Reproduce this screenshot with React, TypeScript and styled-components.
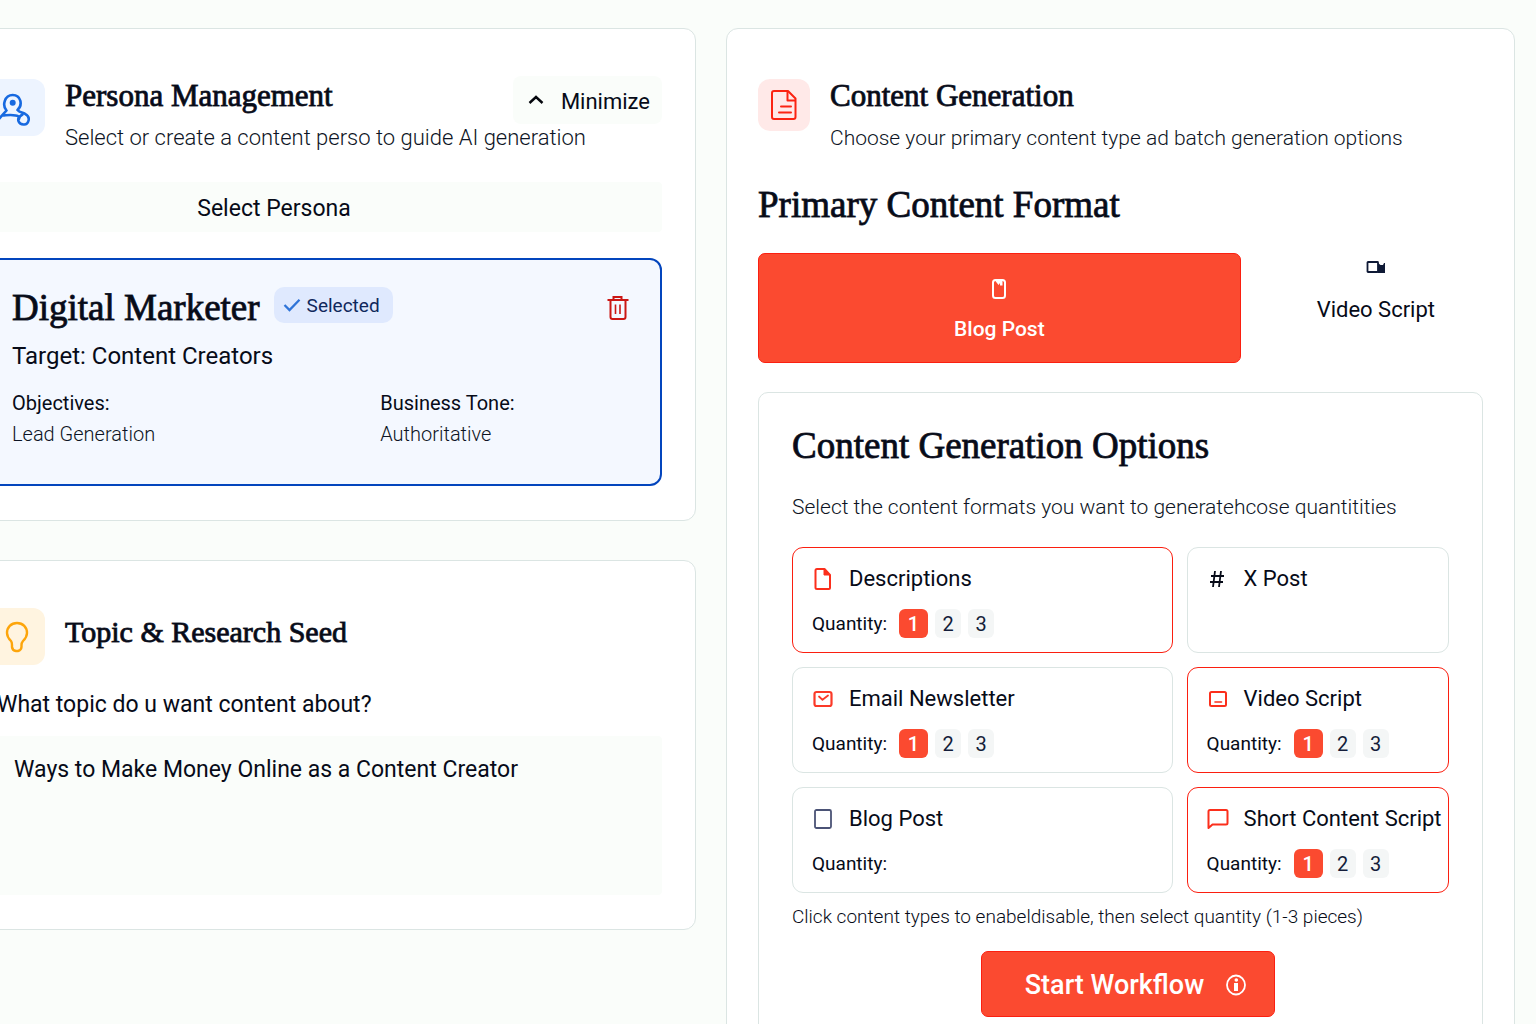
import React, { useState } from "react";
import styled, { createGlobalStyle, css } from "styled-components";

const sans = `Roboto, "Liberation Sans", Arial, sans-serif`;
const serif = `"Liberation Serif", "Times New Roman", serif`;

const ink = "#070b18";
const body = "#0d1424";
const line = "#dbe5e3";
const red = "#fb4a30";
const redLine = "#fb1f10";
const wash = "#fafdfa";

const GlobalStyle = createGlobalStyle`
  *, *::before, *::after { box-sizing: border-box; }
  body { margin: 0; background: ${wash}; color: ${ink}; font-family: ${sans}; }
  h1, h2, h3, p, dl, dd { margin: 0; }
  button, textarea { font: inherit; color: inherit; border: 0; margin: 0; padding: 0; background: none; }
  button { cursor: pointer; }
  svg { display: block; flex: none; }
`;

const Page = styled.main`
  height: 100vh;
  overflow: hidden;
  padding: 28px 21px 0 0;
`;

const Columns = styled.div`
  display: grid;
  grid-template-columns: 742fr 789fr;
  gap: 30px;
  align-items: start;
  margin-left: -46px;
`;

const Stack = styled.div`
  display: flex;
  flex-direction: column;
  gap: 39px;
`;

const Panel = styled.section<{ $inset: number }>`
  min-width: 0;
  padding: 47px ${(p) => p.$inset}px 34px;
  border: 1px solid ${line};
  border-radius: 12px;
  background: #fff;
`;

const Header = styled.header`
  display: grid;
  grid-template-columns: auto 1fr auto;
  grid-template-rows: minmax(48px, auto) auto;
  column-gap: 20px;
`;

const Tile = styled.span<{ $size: number; $bg: string; $drop: number }>`
  grid-row: 1 / span 2;
  display: grid;
  place-items: center;
  width: ${(p) => p.$size}px;
  height: ${(p) => p.$size}px;
  margin-top: ${(p) => p.$drop}px;
  border-radius: 12px;
  background: ${(p) => p.$bg};
`;

/* The face has only regular and bold; a translucent outline gives the weight between them. */
const heading = css`
  -webkit-text-stroke: 1px rgba(7, 11, 24, 0.85);
  white-space: nowrap;
`;

const PanelTitle = styled.h2<{ $middle?: boolean }>`
  align-self: ${(p) => (p.$middle ? "center" : "start")};
  font: 400 ${(p) => (p.$middle ? 30 : 31)}px/40px ${serif};
  ${heading}
`;

const Lead = styled.p<{ $small?: boolean }>`
  grid-column: 2 / span 2;
  font-size: ${(p) => (p.$small ? 21 : 22)}px;
  font-weight: 300;
  line-height: 28px;
  color: ${body};
  white-space: nowrap;
`;

const GhostButton = styled.button`
  display: flex;
  align-items: center;
  gap: 17px;
  height: 48px;
  padding: 3px 12px 0 15px;
  border-radius: 8px;
  background: ${wash};
  font-size: 22px;
`;

const SelectButton = styled.button`
  display: block;
  width: 100%;
  height: 50px;
  margin: 30px 0 26px;
  padding: 3px 102px 0 0;
  border-radius: 4px;
  background: ${wash};
  font-size: 23px;
`;

const PersonaCard = styled.article`
  padding: 26px 29px 34px 22px;
  border: 2px solid #0345bd;
  border-radius: 12px;
  background: #f4f8ff;
`;

const PersonaTop = styled.div`
  display: flex;
  align-items: center;
  gap: 14px;
`;

const SectionTitle = styled.h3`
  font: 400 37px/44px ${serif};
  ${heading}
`;

const Badge = styled.span`
  display: flex;
  align-items: center;
  gap: 6px;
  height: 36px;
  padding: 0 13px 0 9px;
  margin-bottom: 6px;
  border-radius: 10px;
  background: #dfe9fe;
  color: #10285c;
  font-size: 19px;
`;

const IconButton = styled.button`
  margin-left: auto;
  padding: 2px;
`;

const Target = styled.p`
  margin-top: 11px;
  font-size: 24px;
  line-height: 30px;
`;

const Facts = styled.dl`
  display: grid;
  grid-template-columns: 370fr 252fr;
  margin-top: 17px;
  font-size: 20px;
  line-height: 31px;
`;

const FactName = styled.dt``;

const FactValue = styled.dd`
  font-weight: 300;
  color: ${body};
`;

const FieldLabel = styled.label`
  display: block;
  margin: 25px 0 16px;
  padding-left: 9px;
  font-size: 23px;
  line-height: 30px;
`;

const TopicBox = styled.textarea`
  display: block;
  width: 100%;
  height: 159px;
  padding: 19px 26px;
  border-radius: 4px;
  background: ${wash};
  font-size: 23px;
  line-height: 30px;
  resize: none;
  outline: none;
`;

const FormatTitle = styled(SectionTitle)`
  margin: 31px 0 26px;
`;

const Formats = styled.div`
  display: grid;
  grid-template-columns: 482fr 214fr;
  gap: 28px;
  align-items: start;
`;

const FormatButton = styled.button<{ $active: boolean }>`
  display: flex;
  flex-direction: column;
  align-items: center;
  height: 110px;
  line-height: 28px;
  ${(p) =>
    p.$active
      ? css`
          gap: 15px;
          padding-top: 24px;
          border: 1px solid ${redLine};
          border-radius: 7px;
          background: ${red};
          color: #fff;
          font-size: 21px;
          font-weight: 500;
        `
      : css`
          gap: 22px;
          padding-top: 7px;
          font-size: 22px;
        `}
`;

const Options = styled.section`
  margin-top: 29px;
  padding: 31px 33px 60px;
  border: 1px solid ${line};
  border-radius: 10px;
`;

const OptionsLead = styled(Lead)`
  margin: 25px 0 26px;
`;

const OptionGrid = styled.div`
  display: grid;
  grid-template-columns: 380fr 262fr;
  grid-auto-rows: 106px;
  gap: 14px;
`;

const OptionCard = styled.div<{ $active: boolean }>`
  display: flex;
  flex-direction: column;
  gap: 15px;
  min-width: 0;
  padding: 16px 0 0 19px;
  border: 1px solid ${(p) => (p.$active ? redLine : line)};
  border-radius: 11px;
`;

const OptionToggle = styled.button`
  display: flex;
  align-items: center;
  gap: 15px;
  font-size: 22px;
  line-height: 30px;
  white-space: nowrap;
`;

const OptionIcon = styled.span`
  display: grid;
  place-items: center;
  width: 22px;
  height: 24px;
`;

const Quantity = styled.div`
  display: flex;
  align-items: center;
  gap: 7px;
  height: 29px;
  font-size: 19px;
`;

const QuantityLabel = styled.span`
  margin-right: 5px;
`;

const Chip = styled.button<{ $on: boolean }>`
  width: ${(p) => (p.$on ? 29 : 26)}px;
  height: 29px;
  border-radius: 6px;
  background: ${(p) => (p.$on ? red : "#f4f6f6")};
  color: ${(p) => (p.$on ? "#fff" : "#141d3a")};
  font-size: 20px;
  font-weight: ${(p) => (p.$on ? 500 : 400)};
`;

const Hint = styled.p`
  margin-top: 10px;
  font-size: 19px;
  font-weight: 300;
  line-height: 28px;
  white-space: nowrap;
`;

const Actions = styled.div`
  display: flex;
  justify-content: center;
  margin-top: 20px;
  padding-left: 15px;
`;

const StartButton = styled.button`
  display: flex;
  align-items: center;
  gap: 22px;
  height: 66px;
  padding: 2px 28px 0 43px;
  border: 1px solid ${redLine};
  border-radius: 7px;
  background: ${red};
  color: #fff;
  font-size: 27px;
  font-weight: 500;
`;

const PersonaIcon = () => (
  <svg width="40" height="40" viewBox="0 0 40 40" fill="none" stroke="#1769e0" strokeWidth="2.6" strokeLinecap="round" strokeLinejoin="round">
    <path d="M1 32 L9.5 22.5 C5 17.5 7.5 7 15.7 7 C24 7 26 17 20.5 22 C22 24 25 24.5 28 25.8 C34.5 29 31.5 37 26.5 36.5 C21 36.3 20.5 31.5 22 28.8 C18 26 12.5 27 6 27.5" />
    <path d="M25.5 26.5 C23.5 27.5 22 28.8 22 31" />
    <circle cx="15.7" cy="14.8" r="3" fill="#1769e0" stroke="none" />
  </svg>
);

const BulbIcon = () => (
  <svg width="24" height="32" viewBox="0 0 24 32" fill="none" stroke="#fda50b" strokeWidth="2.4" strokeLinejoin="round">
    <path d="M12 2 C6 2 2 6.5 2 12 C2 15.5 4 18 6 20 C7 21.2 7 22.5 7 24 V26 A4.5 4.5 0 0 0 11 30 H13 A4.5 4.5 0 0 0 16.5 26 V24 C16.5 22.5 17 21.2 18 20 C20 18 22 15.5 22 12 C22 6.5 18 2 12 2 Z" />
  </svg>
);

const DocumentIcon = () => (
  <svg width="26" height="32" viewBox="0 0 26 32" fill="none" stroke="#fb2312" strokeWidth="2" strokeLinejoin="round" strokeLinecap="round">
    <path d="M3 2 H17 L24.5 9.5 V28 A2 2 0 0 1 22.5 30 H3 A2 2 0 0 1 1 28 V4 A2 2 0 0 1 3 2 Z" />
    <path d="M16.5 2.5 V11.5 H24" />
    <path d="M10 17.5 H20 M8 23.5 H20" />
  </svg>
);

const ChevronUpIcon = () => (
  <svg width="16" height="16" viewBox="0 0 16 16" fill="none" stroke="#05070d" strokeWidth="2.4">
    <path d="M1.5 9 L8 3 L14.5 9" />
  </svg>
);

const CheckIcon = () => (
  <svg width="18" height="14" viewBox="0 0 18 14" fill="none" stroke="#2f74d8" strokeWidth="2.3">
    <path d="M1.5 7 L6.5 12 L16.5 1.8" />
  </svg>
);

const TrashIcon = () => (
  <svg width="22" height="26" viewBox="0 0 22 26" fill="none" stroke="#cb1714" strokeWidth="2">
    <path d="M0.5 5 H21.5 M6.5 5 V2 H14.5 V5 M3.5 5 V22 A2 2 0 0 0 5.5 24 H16.5 A2 2 0 0 0 18.5 22 V5" />
    <path d="M8.5 9.5 V19 M13 9.5 V19" strokeWidth="1.6" />
  </svg>
);

const ClipIcon = () => (
  <svg width="14" height="22" viewBox="0 0 14 22" fill="none" stroke="#fff" strokeWidth="2">
    <rect x="1" y="2" width="12" height="18" rx="2.5" />
    <path d="M3 2.5 L6.5 7 L8 5 V7.5 H10.500 V3 Z" fill="#fff" stroke="none" />
  </svg>
);

const CameraIcon = () => (
  <svg width="20" height="14" viewBox="0 0 20 14">
    <rect x="1.5" y="2" width="10.5" height="10" rx="0.5" fill="none" stroke="#0f1a36" strokeWidth="1.8" />
    <path d="M12 3 L14.5 5 H17 L18 3 H19 V13 H12 Z" fill="#0f1a36" />
  </svg>
);

const FileIcon = () => (
  <svg width="18" height="24" viewBox="0 0 18 24" fill="none" stroke="#fb2f1c" strokeWidth="2" strokeLinejoin="round">
    <path d="M3 2 H10.5 L16 8 V21 A1 1 0 0 1 15 22 H3 A1.5 1.5 0 0 1 1.5 20.5 V3.5 A1.5 1.5 0 0 1 3 2 Z" />
    <path d="M10 2 V8 H16 Z" fill="#fb2f1c" strokeWidth="1" />
  </svg>
);

const MailIcon = () => (
  <svg width="20" height="18" viewBox="0 0 20 18" fill="none" stroke="#fb3a28" strokeWidth="2.2" strokeLinejoin="round">
    <rect x="1.5" y="2" width="17" height="14" rx="2" />
    <path d="M6 6.5 L9.5 9.8 L15 5.5" strokeWidth="1.8" strokeLinecap="round" />
  </svg>
);

const ScreenIcon = () => (
  <svg width="18" height="16" viewBox="0 0 18 16" fill="none" stroke="#fb2f1c" strokeWidth="2">
    <rect x="1" y="1" width="16" height="14" rx="1.5" />
    <path d="M6 11 H12.5" strokeLinecap="round" strokeWidth="1.6" />
  </svg>
);

const PageIcon = () => (
  <svg width="18" height="20" viewBox="0 0 18 20" fill="none" stroke="#4b5376" strokeWidth="1.8">
    <rect x="1" y="1" width="16" height="18" rx="1.5" />
  </svg>
);

const ChatIcon = () => (
  <svg width="22" height="22" viewBox="0 0 22 22" fill="none" stroke="#fb2f1c" strokeWidth="2" strokeLinejoin="round">
    <path d="M1.5 20 V3.5 A1.5 1.5 0 0 1 3 2 H19 A1.5 1.5 0 0 1 20.5 3.5 V15 A1.5 1.5 0 0 1 19 16.5 H5.5 Z" />
  </svg>
);

const HashIcon = () => (
  <svg width="18" height="18" viewBox="0 0 18 18" fill="none" stroke="#070b18" strokeWidth="1.8">
    <path d="M6 1 L4 17 M12 1 L10 17 M2 6 H15 M1 12 H14" />
  </svg>
);

const InfoIcon = () => (
  <svg width="20" height="22" viewBox="0 0 20 22" fill="none" stroke="#fff">
    <ellipse cx="10" cy="11" rx="9" ry="9.5" strokeWidth="1.8" />
    <path d="M8 9 H12 V17 H8 Z" fill="#fff" stroke="none" />
    <circle cx="10.3" cy="6" r="1.8" fill="#fff" stroke="none" />
  </svg>
);

type Option = { id: string; name: string; icon: React.ReactNode; quantities?: number[] };

const options: Option[] = [
  { id: "descriptions", name: "Descriptions", icon: <FileIcon />, quantities: [1, 2, 3] },
  { id: "x", name: "X Post", icon: <HashIcon /> },
  { id: "email", name: "Email Newsletter", icon: <MailIcon />, quantities: [1, 2, 3] },
  { id: "video", name: "Video Script", icon: <ScreenIcon />, quantities: [1, 2, 3] },
  { id: "blog", name: "Blog Post", icon: <PageIcon />, quantities: [] },
  { id: "short", name: "Short Content Script", icon: <ChatIcon />, quantities: [1, 2, 3] },
];

const formats = [
  { id: "blog", name: "Blog Post", icon: <ClipIcon /> },
  { id: "video", name: "Video Script", icon: <CameraIcon /> },
];

export default function App() {
  const [format, setFormat] = useState("blog");
  const [enabled, setEnabled] = useState<string[]>(["descriptions", "video", "short"]);
  const [counts, setCounts] = useState<Record<string, number>>({});
  const [topic, setTopic] = useState("Ways to Make Money Online as a Content Creator");

  const toggle = (id: string) =>
    setEnabled((list) => (list.includes(id) ? list.filter((x) => x !== id) : [...list, id]));

  return (
    <>
      <GlobalStyle />
      <Page>
        <Columns>
          <Stack>
            <Panel $inset={33}>
              <Header>
                <Tile $size={57} $bg="#edf4ff" $drop={3}><PersonaIcon /></Tile>
                <PanelTitle>Persona Management</PanelTitle>
                <GhostButton type="button"><ChevronUpIcon />Minimize</GhostButton>
                <Lead>Select or create a content perso to guide AI generation</Lead>
              </Header>
              <SelectButton type="button">Select Persona</SelectButton>
              <PersonaCard>
                <PersonaTop>
                  <SectionTitle>Digital Marketer</SectionTitle>
                  <Badge><CheckIcon />Selected</Badge>
                  <IconButton type="button" aria-label="Delete persona"><TrashIcon /></IconButton>
                </PersonaTop>
                <Target>Target: Content Creators</Target>
                <Facts>
                  <div>
                    <FactName>Objectives:</FactName>
                    <FactValue>Lead Generation</FactValue>
                  </div>
                  <div>
                    <FactName>Business Tone:</FactName>
                    <FactValue>Authoritative</FactValue>
                  </div>
                </Facts>
              </PersonaCard>
            </Panel>

            <Panel $inset={33}>
              <Header>
                <Tile $size={57} $bg="#fff4e0" $drop={0}><BulbIcon /></Tile>
                <PanelTitle $middle>Topic &amp; Research Seed</PanelTitle>
              </Header>
              <FieldLabel htmlFor="topic">What topic do u want content about?</FieldLabel>
              <TopicBox id="topic" value={topic} onChange={(e) => setTopic(e.target.value)} />
            </Panel>
          </Stack>

          <Panel $inset={31}>
            <Header>
              <Tile $size={52} $bg="#ffe9e8" $drop={3}><DocumentIcon /></Tile>
              <PanelTitle>Content Generation</PanelTitle>
              <Lead $small>Choose your primary content type ad batch generation options</Lead>
            </Header>
            <FormatTitle>Primary Content Format</FormatTitle>
            <Formats>
              {formats.map((f) => (
                <FormatButton key={f.id} type="button" $active={format === f.id} aria-pressed={format === f.id} onClick={() => setFormat(f.id)}>
                  {f.icon}
                  {f.name}
                </FormatButton>
              ))}
            </Formats>

            <Options>
              <SectionTitle>Content Generation Options</SectionTitle>
              <OptionsLead $small>Select the content formats you want to generatehcose quantitities</OptionsLead>
              <OptionGrid>
                {options.map((o) => (
                  <OptionCard key={o.id} $active={enabled.includes(o.id)}>
                    <OptionToggle type="button" aria-pressed={enabled.includes(o.id)} onClick={() => toggle(o.id)}>
                      <OptionIcon>{o.icon}</OptionIcon>
                      {o.name}
                    </OptionToggle>
                    {o.quantities && (
                      <Quantity role="group" aria-label={`${o.name} quantity`}>
                        <QuantityLabel>Quantity:</QuantityLabel>
                        {o.quantities.map((n) => (
                          <Chip key={n} type="button" $on={(counts[o.id] ?? 1) === n} onClick={() => setCounts({ ...counts, [o.id]: n })}>
                            {n}
                          </Chip>
                        ))}
                      </Quantity>
                    )}
                  </OptionCard>
                ))}
              </OptionGrid>
              <Hint>Click content types to enabeldisable, then select quantity (1-3 pieces)</Hint>
              <Actions>
                <StartButton type="button">Start Workflow<InfoIcon /></StartButton>
              </Actions>
            </Options>
          </Panel>
        </Columns>
      </Page>
    </>
  );
}
